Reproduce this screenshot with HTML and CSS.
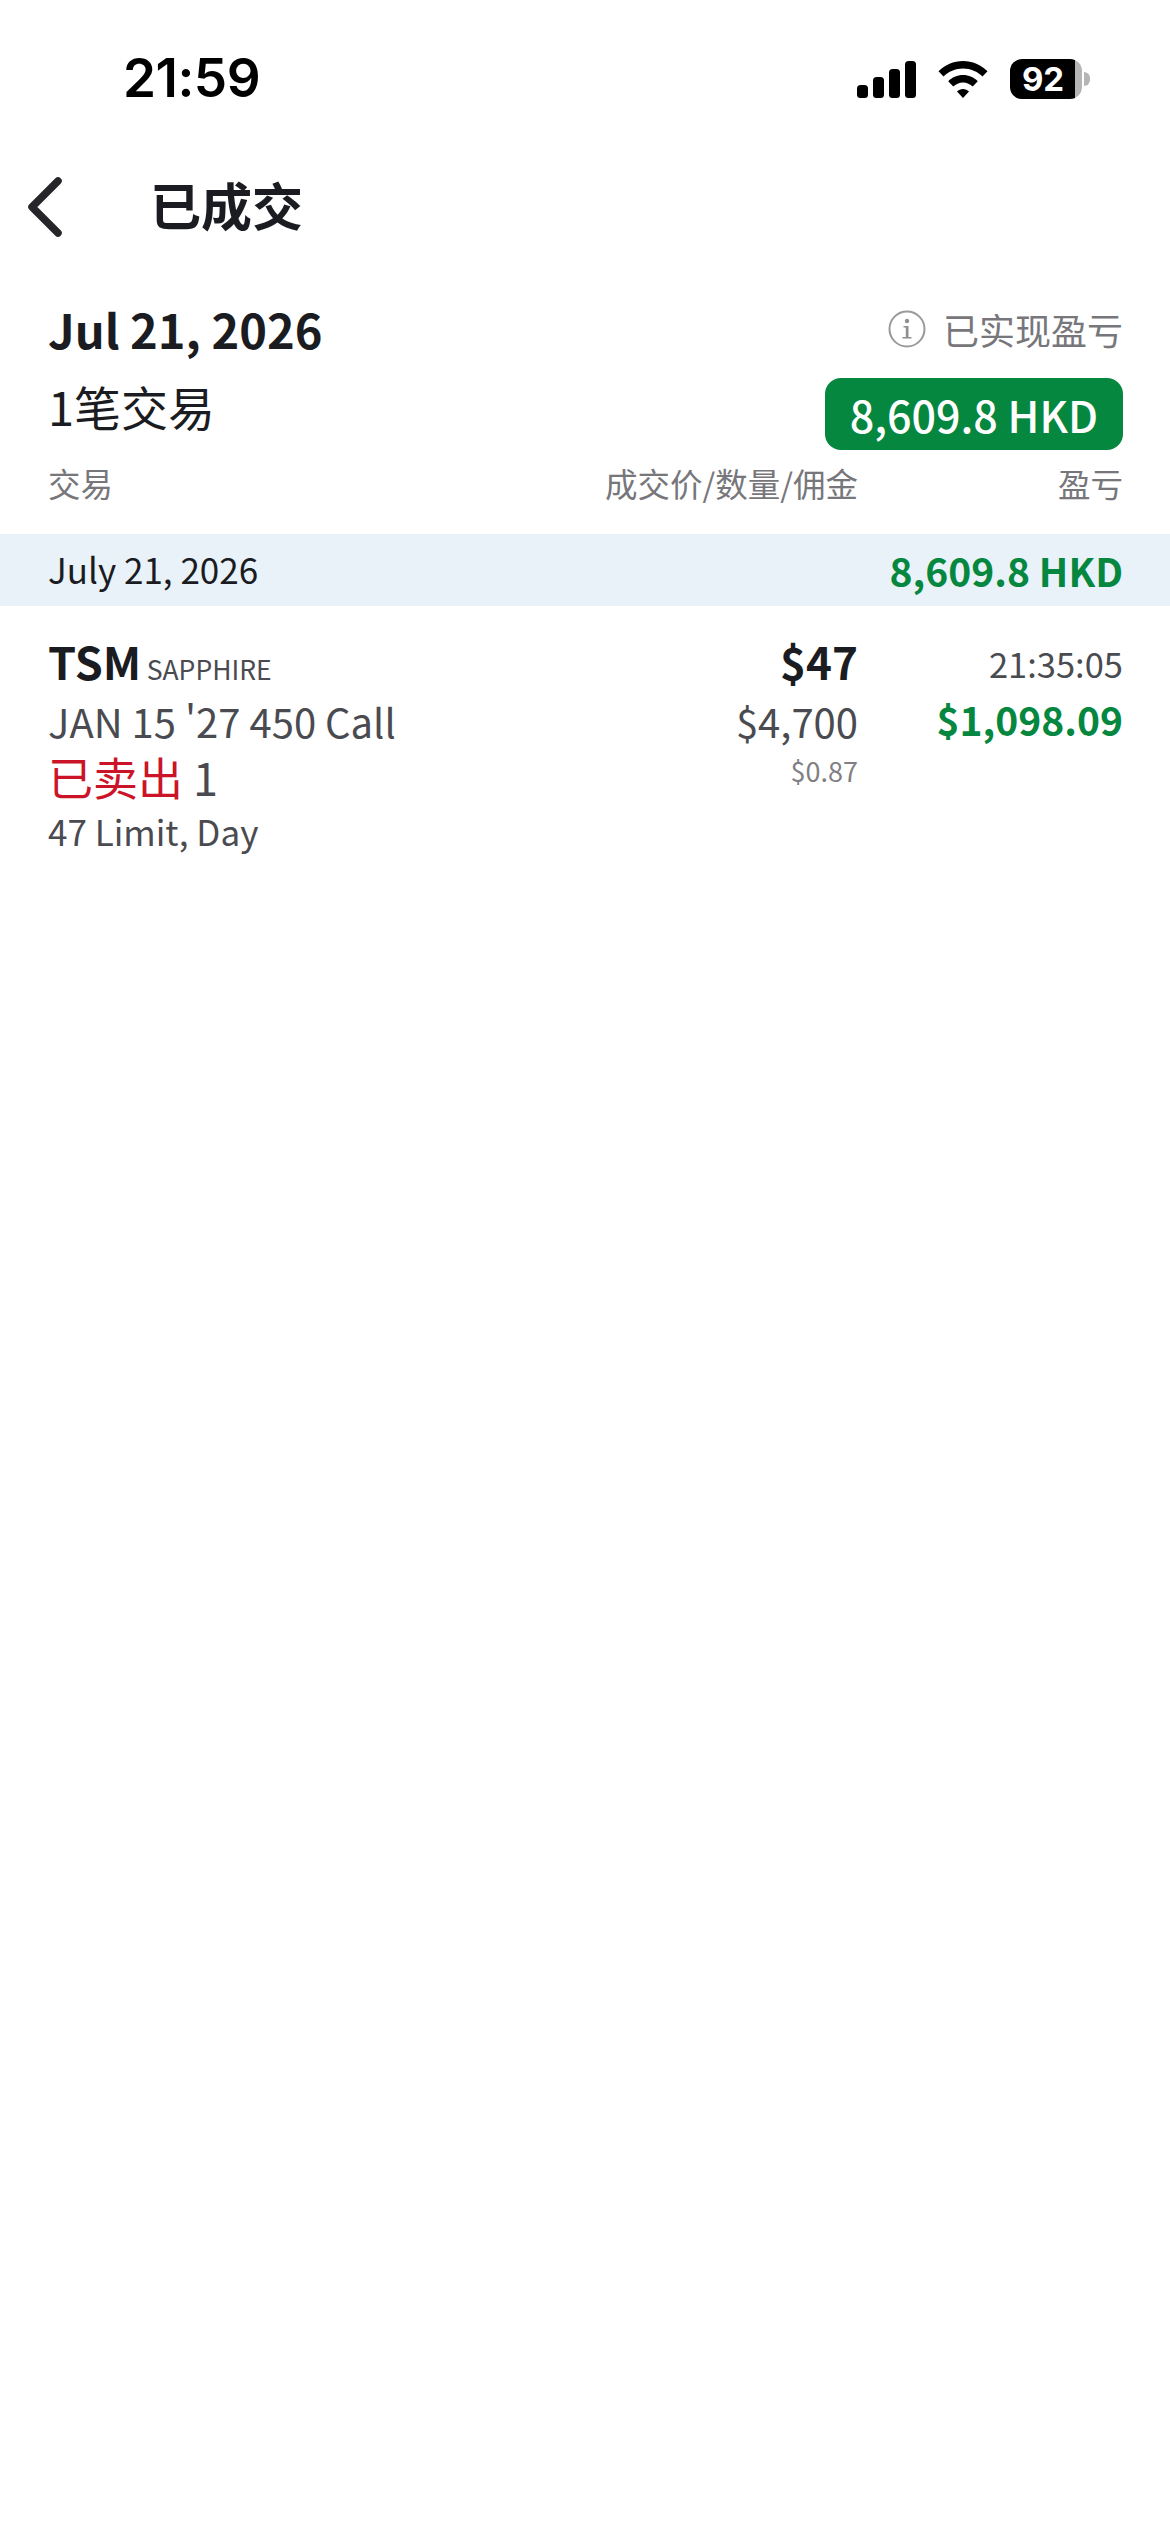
FILE: index.html
```html
<!DOCTYPE html>
<html lang="zh-CN">
<head>
<meta charset="utf-8">
<title>已成交</title>
<link rel="stylesheet" href="styles.css">
</head>
<body>
<header class="status">
  <span class="clock">21:59</span>
  <div class="status-icons">
    <svg class="signal" width="59" height="37" viewBox="0 0 59 37"><rect x="0" y="24" width="11" height="13" rx="3.5"/><rect x="16" y="16" width="11" height="21" rx="3.5"/><rect x="32" y="8" width="11" height="29" rx="3.5"/><rect x="48" y="0" width="11" height="37" rx="3.5"/></svg>
    <svg class="wifi" width="52" height="37" viewBox="0 0 50 37"><path d="M25 0C15.500 0 7 3.800 0.500 10.200L5.500 15.600C10.500 10.600 17.400 7.500 25 7.500S39.500 10.600 44.500 15.600L49.500 10.200C43 3.800 34.500 0 25 0Z"/><path d="M25 14C19.200 14 14 16.400 10.200 20.200L15.300 25.600C17.800 23 21.200 21.400 25 21.400S32.200 23 34.700 25.600L39.800 20.200C36 16.400 30.800 14 25 14Z"/><path d="M25 28C22.700 28 20.600 28.900 19 30.400L25 37L31 30.400C29.400 28.900 27.300 28 25 28Z"/></svg>
    <div class="battery"><div class="battery-body">92</div><div class="battery-nub"></div></div>
  </div>
</header>
<nav class="nav">
  <svg class="back" width="36" height="60" viewBox="0 0 36 60"><path d="M31 4L5 30L31 56" fill="none" stroke="#26262a" stroke-width="7.500" stroke-linecap="round" stroke-linejoin="round"/></svg>
  <h1 class="title">已成交</h1>
</nav>
<section class="summary">
  <div class="sum-row r1">
    <span class="date">Jul 21, 2026</span>
    <span class="realized">
      <svg class="info" width="38" height="38" viewBox="0 0 38 38"><circle cx="19" cy="19" r="17.500" fill="none" stroke="#9a9a9a" stroke-width="2"/><circle cx="19" cy="11" r="2.200" fill="#8f8f8f"/><path d="M15.500 16H20.500V27H23.500V28.500H14.500V27H17.800V17.500H15.500Z" fill="#8f8f8f"/></svg>
      已实现盈亏
    </span>
  </div>
  <div class="sum-row r2">
    <span class="count">1笔交易</span>
    <span class="pill">8,609.8 HKD</span>
  </div>
  <div class="cols r3">
    <span>交易</span>
    <span class="mid">成交价/数量/佣金</span>
    <span class="last">盈亏</span>
  </div>
</section>
<div class="band">
  <span class="band-date">July 21, 2026</span>
  <span class="band-total">8,609.8 HKD</span>
</div>
<article class="trade">
  <div class="c1">
    <div class="l-sym"><b class="sym">TSM</b> <span class="exch">SAPPHIRE</span></div>
    <div class="l-contract">JAN 15 '27 450 Call</div>
    <div class="l-side"><span class="sold">已卖出</span> 1</div>
    <div class="l-order">47 Limit, Day</div>
  </div>
  <div class="c2">
    <div class="price">$47</div>
    <div class="amount">$4,700</div>
    <div class="fee">$0.87</div>
  </div>
  <div class="c3">
    <div class="time">21:35:05</div>
    <div class="pnl">$1,098.09</div>
  </div>
</article>
</body>
</html>
```
FILE: styles.css
```css
* { box-sizing: border-box; margin: 0; padding: 0; }
html, body { background: #fff; }
body {
  width: 1170px;
  height: 2532px;
  overflow: hidden;
  font-family: "Noto Sans CJK SC", "Noto Sans", sans-serif;
  color: #1a1c21;
}
.status {
  height: 150px;
  display: flex;
  align-items: flex-start;
  justify-content: space-between;
  padding: 46px 80px 0 123px;
}
.clock {
  font-family: Inter, "Liberation Sans", sans-serif;
  font-weight: 600;
  font-size: 53px;
  line-height: 64px;
  color: #000;
  letter-spacing: -0.5px;
}
.status-icons { display: flex; align-items: center; gap: 21px; padding-top: 13px; }
.signal, .wifi { fill: #000; display: block; }
.battery { display: flex; align-items: center; gap: 2px; }
.battery-body {
  width: 72px;
  height: 40px;
  border-radius: 12px;
  background: linear-gradient(90deg, #000 0, #000 90%, #b5b5b5 90%);
  color: #fff;
  font-family: Inter, "Liberation Sans", sans-serif;
  font-weight: 700;
  font-size: 33px;
  line-height: 40px;
  text-align: center;
  padding-right: 6px;
}
.battery-nub { width: 6px; height: 14px; background: #b5b5b5; border-radius: 0 7px 7px 0; }
.nav {
  height: 114px;
  margin-top: -3px;
  display: flex;
  align-items: center;
  padding-left: 27px;
}
.back { display: block; margin-top: 6px; }
.title {
  font-size: 51px;
  font-weight: 700;
  line-height: 70px;
  margin-left: 87px;
  color: #1a1c21;
}
.summary { padding: 30px 47px 0 48px; }
.sum-row { display: flex; justify-content: space-between; align-items: center; }
.r1 { height: 76px; }
.date { font-size: 47px; font-weight: 700; line-height: 74px; }
.realized {
  display: flex;
  align-items: center;
  gap: 17px;
  font-size: 36px;
  color: #77777b;
}
.info { display: block; }
.r2 { height: 87px; padding-top: 7px; }
.count { font-size: 47px; line-height: 80px; color: #1a1c21; padding-bottom: 17px; }
.pill {
  background: #05873f;
  color: #fff;
  font-size: 43px;
  font-weight: 500;
  height: 72px;
  line-height: 72px;
  padding: 0 25px;
  border-radius: 16px;
}
.cols {
  display: grid;
  grid-template-columns: 1fr auto 265px;
  height: 80px;
  padding-bottom: 23px;
  align-items: center;
  font-size: 32.500px;
  color: #77777b;
}
.last { text-align: right; }
.band {
  height: 72px;
  background: #e9f1f9;
  display: flex;
  align-items: center;
  justify-content: space-between;
  padding: 0 47px 0 48px;
}
.band-date { font-size: 35px; color: #1a1c21; padding-bottom: 3px; }
.band-total { font-size: 39px; font-weight: 700; color: #05873f; }
.trade {
  display: grid;
  grid-template-columns: 1fr auto 265px;
  padding: 25px 47px 0 48px;
}
.l-sym { height: 62px; line-height: 60px; white-space: nowrap; }
.sym { font-size: 45px; font-weight: 700; color: #1a1c21; }
.exch { font-size: 26.500px; color: #4a4b50; margin-left: 2px; }
.l-contract { height: 56px; line-height: 56px; font-size: 40px; color: #4a4b50; }
.l-side { height: 56px; line-height: 56px; font-size: 45px; color: #4a4b50; }
.sold { color: #cb1428; }
.l-order { height: 52px; line-height: 52px; font-size: 35px; color: #4a4b50; }
.c2, .c3 { text-align: right; }
.price { height: 60px; line-height: 60px; font-size: 44px; font-weight: 700; color: #1a1c21; }
.amount { height: 62px; line-height: 60px; font-size: 40px; color: #4a4b50; }
.fee { height: 36px; line-height: 36px; font-size: 27px; color: #808084; }
.time { height: 60px; line-height: 64px; font-size: 34.500px; color: #4a4b50; }
.pnl { height: 56px; line-height: 56px; font-size: 39px; font-weight: 700; color: #05873f; }
```
